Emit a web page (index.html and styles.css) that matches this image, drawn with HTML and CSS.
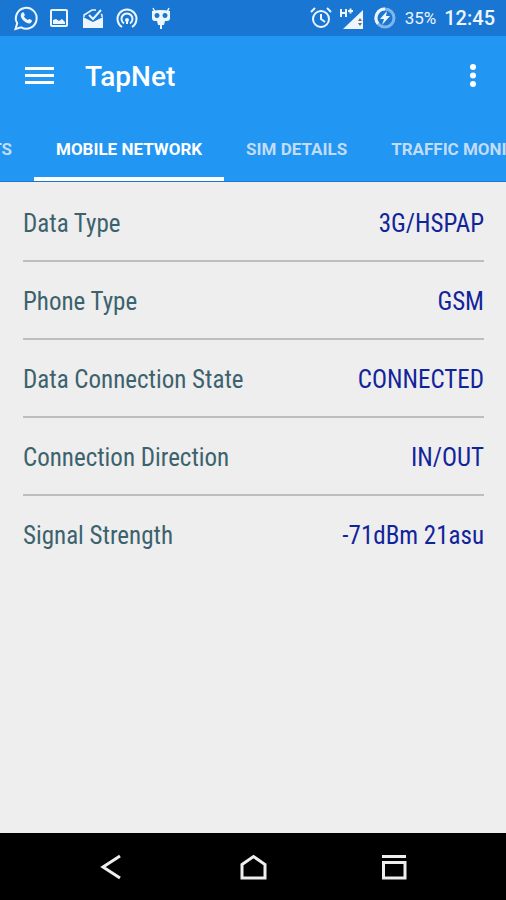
FILE: index.html
```html
<!DOCTYPE html>
<html lang="en">
<head>
<meta charset="utf-8">
<meta name="viewport" content="width=device-width, initial-scale=1">
<title>TapNet</title>
<link rel="stylesheet" href="styles.css">
</head>
<body>
<div class="status">
  <div class="notices">
    <svg class="icon" viewBox="0 0 24 24"><path class="line" d="M1.500 23l1.700-5.700A10.400 10.400 0 1 1 7.200 21.300z"/><path class="fill" d="M8.300 6.500c.6-.5 1.300-.4 1.600.2l.9 2c.2.500-.4 1.100-.9 1.600.9 1.800 2.200 3 4.100 3.800.5-.6 1-1.300 1.500-1.100l2 1c.6.3.4 1.300 0 1.900-2 2.800-5.500 1.200-8.100-1.300C6.700 11.900 5.700 8.700 8.300 6.500z"/></svg>
    <svg class="icon" viewBox="0 0 24 24"><rect class="line" x="3" y="4" width="16" height="16" rx="1"/><path class="fill" d="M5 18v-4l3-1 3 2 3-2 3 3v2z"/></svg>
    <svg class="icon" viewBox="0 0 24 24"><path class="fill" d="M1 11l10 5 10-5v11H1z"/><path class="line thin" d="M2 11V9l8-5h4M20 11V9l-1-1"/><path class="line" d="M7 9l4 4 8-9"/></svg>
    <svg class="icon" viewBox="0 0 24 24"><path class="line" d="M6 21a9.500 9.500 0 1 1 10 0M8 17.500a5.500 5.500 0 1 1 6 0"/><circle class="fill" cx="11" cy="14" r="2"/><path class="line" d="M11 14v4"/></svg>
    <svg class="icon" viewBox="0 0 24 24"><path class="line thin" d="M5 6L3 2M17 6l2-4"/><path class="line" d="M11 16v7"/><path class="fill" fill-rule="evenodd" d="M2 5q9-2 18 0v7q0 3-3 3h-2l-1 4H8l-1-4H5q-3 0-3-3zM7 7a2.500 2.500 0 1 0 .01 0zM15 7a2.500 2.500 0 1 0 .01 0z"/></svg>
  </div>
  <div class="system">
    <svg class="icon" viewBox="0 0 24 24"><circle class="line" cx="12" cy="13" r="8"/><path class="line" d="M2 6l4-4M22 6l-4-4M12 8v5l4 3"/></svg>
    <svg class="icon signal" viewBox="0 0 24 24"><path class="fill" d="M22 4v19H2z"/><path class="line" d="M0 3v8M5 3v8M0 7h5M7 5h5M9.500 2.500v5"/><path class="mark" d="M17 15l2-3 2 3zM17 17h4l-2 3z"/></svg>
    <svg class="icon" viewBox="0 0 24 24"><circle class="line wide pale" cx="12" cy="12" r="9"/><path class="line wide" d="M5 17.700A9 9 0 0 1 12 3"/><path class="fill" d="M14 5l-7 8h4l-2 6 8-9h-4z"/></svg>
    <span class="level">35%</span>
    <time class="clock">12:45</time>
  </div>
</div>
<header class="header">
  <div class="bar">
    <button class="action" aria-label="Menu"><svg class="menu" viewBox="0 0 29 20"><path class="line wide" d="M0 2.500h29M0 9.500h29M0 16.500h29"/></svg></button>
    <h1 class="title">TapNet</h1>
    <button class="action" aria-label="More"><svg class="more" viewBox="0 0 8 24"><circle cx="4" cy="3" r="3"/><circle cx="4" cy="11.500" r="3"/><circle cx="4" cy="20" r="3"/></svg></button>
  </div>
  <nav class="tabs">
    <a class="tab previous" href="#ts">TS</a>
    <a class="tab active" href="#mobile" aria-current="page">MOBILE NETWORK</a>
    <a class="tab" href="#sim">SIM DETAILS</a>
    <a class="tab" href="#traffic">TRAFFIC MONI</a>
  </nav>
</header>
<main class="content">
  <dl class="details">
    <div class="row"><dt>Data Type</dt><dd>3G/HSPAP</dd></div>
    <div class="row"><dt>Phone Type</dt><dd>GSM</dd></div>
    <div class="row"><dt>Data Connection State</dt><dd>CONNECTED</dd></div>
    <div class="row"><dt>Connection Direction</dt><dd>IN/OUT</dd></div>
    <div class="row"><dt>Signal Strength</dt><dd>-71dBm 21asu</dd></div>
  </dl>
</main>
<footer class="navigation">
  <button class="key" aria-label="Back"><svg class="icon" viewBox="0 0 24 24"><path class="line wide" d="M20 1L3 12l17 11"/></svg></button>
  <button class="key" aria-label="Home"><svg class="icon" viewBox="0 0 24 24"><path class="line wide" d="M1 9.500L12.500 1.500 24 9.500V23H1z"/></svg></button>
  <button class="key" aria-label="Recent apps"><svg class="icon" viewBox="0 0 24 24"><path class="line wide" d="M0 1.500h24M1.500 7.500h21.500V23H1.500z"/></svg></button>
</footer>
</body>
</html>
```
FILE: styles.css
```css
* { box-sizing: border-box; }
body {
  margin: 0;
  min-height: 100vh;
  display: flex;
  flex-direction: column;
  background: #eeeeee;
  color: #fff;
  font-family: Roboto, "Liberation Sans", sans-serif;
}
button { border: 0; padding: 0; background: none; color: inherit; }
svg { display: block; overflow: visible; }
.fill { fill: currentColor; }
.line { fill: none; stroke: currentColor; stroke-width: 2; }
.thin { stroke-width: 1.5; }
.wide { stroke-width: 3; }
.pale { opacity: .5; }
.mark { fill: #776b60; }
.status {
  height: 36px;
  padding: 0 11px 0 14px;
  display: flex;
  align-items: center;
  justify-content: space-between;
  background: #1976d2;
  color: #edf5fd;
}
.notices { display: flex; gap: 10px; }
.system { display: flex; align-items: center; gap: 8px; }
.icon { width: 24px; height: 24px; flex: none; }
.level { font-size: 17px; }
.clock { font-size: 20px; font-weight: 500; }
.header { background: #2196f3; border-bottom: 1px solid #1976d2; }
.bar {
  height: 80px;
  padding: 0 29px 0 25px;
  display: flex;
  align-items: center;
}
.menu { width: 29px; height: 20px; }
.more { width: 8px; height: 24px; fill: #fff; }
.title { margin: 0 auto 0 31px; font-size: 28px; font-weight: 500; }
.tabs { height: 65px; display: flex; overflow: hidden; }
.tab {
  flex: none;
  padding: 0 22px;
  border-bottom: 4px solid transparent;
  color: #c3dcf6;
  font-size: 17px;
  font-weight: 700;
  line-height: 66px;
  text-decoration: none;
  white-space: nowrap;
}
.previous { width: 34px; padding-left: 0; display: flex; justify-content: flex-end; }
.active { color: #fff; border-color: #fff; }
.content { flex: 1; padding: 2px 22px 0 23px; }
.details { margin: 0; }
.row {
  height: 78px;
  padding-top: 2px;
  display: flex;
  align-items: center;
  justify-content: space-between;
  border-bottom: 2px solid #bdbdbd;
  font-family: "Roboto Condensed", Roboto, sans-serif;
  font-size: 25px;
}
.row:last-child { border-bottom-color: transparent; }
dt { color: #3c626d; }
dd { margin: 0; color: #12249a; }
.navigation {
  height: 67px;
  padding: 0 41px;
  display: flex;
  align-items: center;
  justify-content: space-around;
  background: #000;
  color: #eee;
}
```
